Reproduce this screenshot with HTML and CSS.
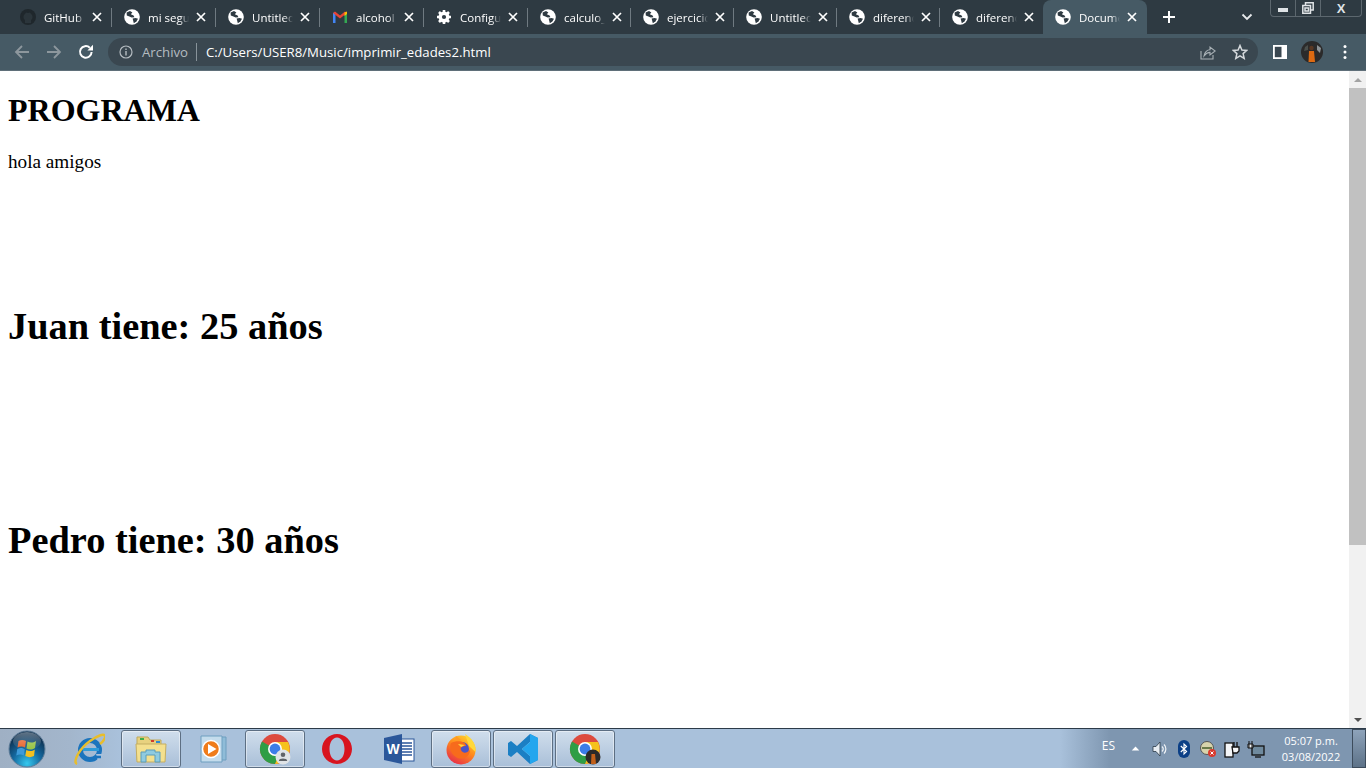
FILE: index.html
```html
<!DOCTYPE html>
<html lang="en">
<head>
  <meta charset="UTF-8" />
  <title>Document</title>
  <link rel="stylesheet" href="styles.css">
</head>
<body>
  <svg class="defs" width="0" height="0">
    <symbol id="globe" viewBox="0 0 16 16">
      <circle cx="8" cy="8" r="7.800" fill="#fff"/>
      <path d="M2.600 3.400 L6 2 L8.400 3.400 L6.800 5.200 L9.600 6.600 L10.400 8.200 L7.600 8.600 L5.400 7.600 L2.800 6.600 Z" fill="#2e3a42"/>
      <path d="M8.600 9.400 L11.600 9 L14 9.800 L12.400 12.600 L9.800 14.200 L9.200 11.800 Z" fill="#2e3a42"/>
    </symbol>
    <symbol id="close" viewBox="0 0 10 10">
      <path d="M1 1 L9 9 M9 1 L1 9" stroke="#fff" stroke-width="1.700" fill="none"/>
    </symbol>
    <symbol id="chrome" viewBox="0 0 32 32">
      <circle cx="16" cy="16" r="15" fill="#dd4b3e"/>
      <path d="M16 16 L3 8.500 A15 15 0 0 0 16 31 L23 18 Z" fill="#2f9e46"/>
      <path d="M16 9 L29 9 A15 15 0 0 1 16 31 L22 18 Z" fill="#f6c21c"/>
      <circle cx="16" cy="16" r="7" fill="#fff"/>
      <circle cx="16" cy="16" r="5.400" fill="#3b7de8"/>
    </symbol>
  </svg>

  <div class="chrome-top">
    <div class="tabstrip">
      <div class="tab sep">
        <svg class="fav" viewBox="0 0 16 16"><circle cx="8" cy="8" r="8" fill="#1f272c"/><path d="M5 14 V11 C3 10 3 6 5 5 L6 3.500 C7 4 9 4 10 3.500 L11 5 C13 6 13 10 11 11 V14 Z" fill="#2b353b"/></svg>
        <span class="tab-title">GitHub</span>
        <svg class="x"><use href="#close"/></svg>
      </div>
      <div class="tab sep">
        <svg class="fav"><use href="#globe"/></svg>
        <span class="tab-title">mi segu</span>
        <svg class="x"><use href="#close"/></svg>
      </div>
      <div class="tab sep">
        <svg class="fav"><use href="#globe"/></svg>
        <span class="tab-title">Untitled</span>
        <svg class="x"><use href="#close"/></svg>
      </div>
      <div class="tab sep">
        <svg class="fav" viewBox="0 0 16 16">
          <path d="M1 14 V4 L3.500 3 V14 Z" fill="#4285f4"/>
          <path d="M15 14 V4 L12.500 3 V14 Z" fill="#34a853"/>
          <path d="M1 4 L3 2.400 L8 6.400 L13 2.400 L15 4 L8 9.600 Z" fill="#ea4335"/>
          <path d="M12.500 3.400 L15 2.600 V5 L12.500 7 Z" fill="#fbbc04"/>
        </svg>
        <span class="tab-title">alcohol</span>
        <svg class="x"><use href="#close"/></svg>
      </div>
      <div class="tab sep">
        <svg class="fav" viewBox="0 0 16 16">
          <circle cx="8" cy="8" r="3.800" fill="none" stroke="#fff" stroke-width="3.400"/>
          <path d="M8 1 V15 M1 8 H15 M3 3 L13 13 M13 3 L3 13" stroke="#fff" stroke-width="2.600"/>
          <circle cx="8" cy="8" r="2.100" fill="#2e3a42"/>
        </svg>
        <span class="tab-title">Configu</span>
        <svg class="x"><use href="#close"/></svg>
      </div>
      <div class="tab sep">
        <svg class="fav"><use href="#globe"/></svg>
        <span class="tab-title">calculo_</span>
        <svg class="x"><use href="#close"/></svg>
      </div>
      <div class="tab sep">
        <svg class="fav"><use href="#globe"/></svg>
        <span class="tab-title">ejercicio</span>
        <svg class="x"><use href="#close"/></svg>
      </div>
      <div class="tab sep">
        <svg class="fav"><use href="#globe"/></svg>
        <span class="tab-title">Untitled</span>
        <svg class="x"><use href="#close"/></svg>
      </div>
      <div class="tab sep">
        <svg class="fav"><use href="#globe"/></svg>
        <span class="tab-title">diferenc</span>
        <svg class="x"><use href="#close"/></svg>
      </div>
      <div class="tab">
        <svg class="fav"><use href="#globe"/></svg>
        <span class="tab-title">diferenc</span>
        <svg class="x"><use href="#close"/></svg>
      </div>
      <div class="tab active">
        <svg class="fav"><use href="#globe"/></svg>
        <span class="tab-title">Docume</span>
        <svg class="x"><use href="#close"/></svg>
      </div>
      <svg class="new-tab" viewBox="0 0 14 14"><path d="M7 1 V13 M1 7 H13" stroke="#fff" stroke-width="2" fill="none"/></svg>
      <svg class="tab-menu" viewBox="0 0 12 8"><path d="M1.500 1.500 L6 6 L10.500 1.500" stroke="#e8eaed" stroke-width="1.800" fill="none"/></svg>
    </div>
    <div class="winbtns">
      <div class="winbtn min"><span class="min-bar"></span></div>
      <div class="winbtn restore">
        <svg viewBox="0 0 12 12" width="12" height="12"><path d="M3.500 3 V.8 H11.200 V8 H9 M.8 3.500 H8.500 V11.200 H.8 Z M3 6 H6.500 V9 H3 Z" stroke="#dfe3e6" stroke-width="1.500" fill="none"/></svg>
      </div>
      <div class="winbtn closebtn">X</div>
    </div>
  </div>

  <div class="toolbar">
    <svg class="nav-ico" viewBox="0 0 16 16"><path d="M15 8 H2 M8 2 L2 8 L8 14" stroke="#8d979d" stroke-width="1.800" fill="none"/></svg>
    <svg class="nav-ico" viewBox="0 0 16 16"><path d="M1 8 H14 M8 2 L14 8 L8 14" stroke="#8d979d" stroke-width="1.800" fill="none"/></svg>
    <svg class="nav-ico" viewBox="0 0 16 16"><path d="M13.600 8 A5.800 5.800 0 1 1 11.800 3.700" stroke="#fff" stroke-width="2" fill="none"/><path d="M9.400 6.400 H15 V.8 Z" fill="#fff"/></svg>
    <div class="omnibox">
      <svg class="info" viewBox="0 0 14 14"><circle cx="7" cy="7" r="6" stroke="#b5bcc1" stroke-width="1.200" fill="none"/><path d="M7 6 V10.500 M7 3.500 V5" stroke="#b5bcc1" stroke-width="1.400"/></svg>
      <span class="scheme">Archivo</span>
      <span class="url">C:/Users/USER8/Music/imprimir_edades2.html</span>
      <svg class="share" viewBox="0 0 16 16"><path d="M1 7 V15 H13 V11" stroke="#a9b1b6" stroke-width="1.100" fill="none"/><path d="M4 12 C4.500 8 7.500 5.800 10 5.800 V3 L15.200 7 L10 11 V8.400 C7.800 8.400 5.800 9.600 4 12 Z" stroke="#a9b1b6" stroke-width="1.100" fill="none"/></svg>
      <svg class="star" viewBox="0 0 16 16"><path d="M8 1.500 L9.900 6 L14.800 6.400 L11.100 9.600 L12.200 14.400 L8 11.900 L3.800 14.400 L4.900 9.600 L1.200 6.400 L6.100 6 Z" stroke="#d5d9dc" stroke-width="1.500" fill="none"/></svg>
    </div>
    <svg class="side" viewBox="0 0 14 14"><rect width="14" height="14" fill="#fff"/><rect x="1.800" y="1.800" width="6.700" height="10.400" fill="#3a4750"/></svg>
    <svg class="avatar" viewBox="0 0 22 22">
      <circle cx="11" cy="11" r="11" fill="#2b2a2a"/>
      <path d="M16 4 L20 7 L19 12 L16 9 Z" fill="#8e9396"/>
      <path d="M4 6 L7 4 L7 9 L3 10 Z" fill="#4a4f4c"/>
      <circle cx="10.500" cy="7" r="2.200" fill="#5a3823"/>
      <path d="M7.500 21 L8 10 H13 L14 21 Z" fill="#dd6a12"/>
    </svg>
    <svg class="dots" viewBox="0 0 4 16"><circle cx="2" cy="2.500" r="1.500" fill="#fff"/><circle cx="2" cy="8" r="1.500" fill="#fff"/><circle cx="2" cy="13.500" r="1.500" fill="#fff"/></svg>
  </div>

  <div class="viewport">
    <main class="page">
      <h1 class="title">PROGRAMA</h1>
      <p class="hello">hola amigos</p>
      <h2 class="age">Juan tiene: 25 años</h2>
      <h2 class="age">Pedro tiene: 30 años</h2>
    </main>
    <div class="scrollbar">
      <div class="arrow up"></div>
      <div class="thumb-track"><div class="thumb"></div></div>
      <div class="arrow down"></div>
    </div>
  </div>

  <div class="taskbar">
    <svg class="orb" viewBox="0 0 38 38">
      <defs>
        <radialGradient id="orbfill" cx="50%" cy="90%" r="80%"><stop offset="0" stop-color="#35c8ee"/><stop offset=".5" stop-color="#14689f"/><stop offset="1" stop-color="#0c2c4a"/></radialGradient>
        <linearGradient id="orbshine" x1="0" y1="0" x2="0" y2="1"><stop offset="0" stop-color="#fff" stop-opacity=".35"/><stop offset="1" stop-color="#fff" stop-opacity="0"/></linearGradient>
      </defs>
      <circle cx="19" cy="19" r="18" fill="url(#orbfill)" stroke="#5f7d99"/>
      <path d="M10.500 11 C13 9.500 15.500 9.500 18 11 L17 17.500 C14.500 16 12 16 9.500 17.500 Z" fill="#e8632c"/>
      <path d="M19.500 11.500 C22 13 25 13 28 11 L27 18 C24 20 21.500 20 18.500 18.500 Z" fill="#96c243"/>
      <path d="M9.300 19 C12 17.500 14 17.500 16.800 19.300 L15.800 25.500 C13 24 11 24 8.300 25.500 Z" fill="#3d9ad9"/>
      <path d="M18.300 20 C21 21.500 24 21.500 26.800 19.500 L26 26 C23 27.500 20.500 27.500 17.300 26 Z" fill="#f4c01f"/>
      <ellipse cx="19" cy="11" rx="14" ry="9" fill="url(#orbshine)"/>
    </svg>
    <div class="pin">
      <svg class="task-ico" viewBox="0 0 32 32">
        <circle cx="17" cy="17" r="9.500" fill="none" stroke="#1b74bd" stroke-width="5"/>
        <path d="M10 16.500 H26" stroke="#2f9bd8" stroke-width="3"/>
        <path d="M23 21 L31 21 L25 28 Z" fill="#a9c1db"/>
        <path d="M22 24 H28" stroke="#1b74bd" stroke-width="2.500"/>
        <path d="M4 31 C-1 29 7 15 17 8 C24 3 31 0 32 3 C32.500 5 30 9 27 11" fill="none" stroke="#e8bd2c" stroke-width="2.400"/>
      </svg>
    </div>
    <div class="pin open">
      <svg class="task-ico" viewBox="0 0 32 32">
        <path d="M2 4 H13 L15 7 H26 V27 H2 Z" fill="#e8d27f" stroke="#bfa95a"/>
        <rect x="5" y="5" width="4" height="2" fill="#3fae49"/>
        <path d="M1 11 H31 L30 29 H2 Z" fill="#f4e08e" stroke="#c4ae62"/>
        <rect x="16" y="7" width="3" height="2" fill="#d23a2c"/>
        <rect x="21" y="8" width="4" height="2" fill="#2c8ad2"/>
        <path d="M6 29 V19 H11 V17 H20 V19 H25 V29 H20 V22 H11 V29 Z" fill="#8fcbe0" stroke="#5b9cba"/>
      </svg>
    </div>
    <div class="pin">
      <svg class="task-ico" viewBox="0 0 32 32">
        <path d="M8 4 H29 V27 H8 Z" fill="#8fbcd8" stroke="#6f9fc0"/>
        <path d="M4 3 H25 V29 H4 Z" fill="#c4dcec" stroke="#6f9fc0"/>
        <circle cx="14" cy="16" r="8.500" fill="#ef7c1a" stroke="#fff" stroke-width="1.500"/>
        <path d="M11 11 L19.500 16 L11 21 Z" fill="#fff"/>
      </svg>
    </div>
    <div class="pin open">
      <svg class="task-ico" viewBox="0 0 32 32">
        <use href="#chrome"/>
        <circle cx="24" cy="24" r="7.500" fill="#dfe3e6"/>
        <circle cx="24" cy="21.800" r="2.300" fill="#5f6368"/>
        <path d="M19.800 28 C20 24.800 28 24.800 28.200 28 Z" fill="#5f6368"/>
      </svg>
    </div>
    <div class="pin">
      <svg class="task-ico" viewBox="0 0 32 32">
        <path d="M16 1 C24 1 31 7.500 31 16 C31 24.500 24 31 16 31 C8 31 1 24.500 1 16 C1 7.500 8 1 16 1 Z M16 4.500 C11.500 4.500 8.500 9.500 8.500 16 C8.500 22.500 11.500 27.500 16 27.500 C20.500 27.500 23.500 22.500 23.500 16 C23.500 9.500 20.500 4.500 16 4.500 Z" fill="#d8141f" fill-rule="evenodd"/>
      </svg>
    </div>
    <div class="pin">
      <svg class="task-ico" viewBox="0 0 32 32">
        <rect x="14" y="6" width="17" height="22" fill="#fff" stroke="#2b579a"/>
        <path d="M18 10 H29 M18 13 H29 M18 16 H29 M18 19 H29 M18 22 H29" stroke="#2b579a" stroke-width="1.400"/>
        <path d="M1 5 L19 1 V31 L1 27 Z" fill="#2b579a"/>
        <text class="word-w" x="10" y="21" text-anchor="middle">W</text>
      </svg>
    </div>
    <div class="pin open">
      <svg class="task-ico" viewBox="0 0 32 32">
        <defs>
          <linearGradient id="foxfill" x1="0.800" y1="0" x2="0.200" y2="1"><stop offset="0" stop-color="#ffd52e"/><stop offset=".45" stop-color="#ff8a1c"/><stop offset="1" stop-color="#e5274d"/></linearGradient>
        </defs>
        <circle cx="16" cy="17" r="14.500" fill="url(#foxfill)"/>
        <path d="M20 1 C27 5 31.500 12 30.500 19 L24 13 Z" fill="#ffd83a"/>
        <path d="M11 3 C10 6 10 8 11 9 L16 7 Z" fill="#ff9a24"/>
        <circle cx="17" cy="16" r="7" fill="#4a55c8"/>
        <path d="M6 10 C12 7 21 8 21 13 C18 13 15 14 16 17 C18 21 22 20 25 17 C25 24 17 28 11 24 C6 21 4 15 6 10 Z" fill="#f76b1c"/>
        <path d="M13 11 L20 12 L16 14 Z" fill="#ffd83a"/>
      </svg>
    </div>
    <div class="pin open">
      <svg class="task-ico" viewBox="0 0 32 32">
        <path d="M23 1 L31 5 V27 L23 31 L10 19 L4 24 L1 22 V10 L4 8 L10 13 Z M23 9 L15 16 L23 23 Z" fill="#1b7fc4" fill-rule="evenodd"/>
        <path d="M23 1 L31 5 V27 L23 31 Z M23 9 V23 L15 16 Z" fill="#23a6ee" fill-rule="evenodd"/>
      </svg>
    </div>
    <div class="pin open">
      <svg class="task-ico" viewBox="0 0 32 32">
        <use href="#chrome"/>
        <circle cx="24" cy="24" r="7.500" fill="#2c2a29"/>
        <path d="M22 31 L22.500 21 H26 L27 31 Z" fill="#c2601a"/>
      </svg>
    </div>

    <div class="tray">
      <span class="lang">ES</span>
      <svg class="tray-up" viewBox="0 0 10 6"><path d="M5 .5 L9.500 5.500 H.5 Z" fill="#fff"/></svg>
      <svg class="tray-ico" viewBox="0 0 18 18"><path d="M2 6.500 H5 L9 2 V16 L5 11.500 H2 Z" fill="#e8edf2" stroke="#2b3a48" stroke-width=".8"/><path d="M11 6.500 C12.500 8 12.500 10 11 11.500 M13 4.500 C15.500 7 15.500 11 13 13.500" stroke="#f0f3f6" stroke-width="1.200" fill="none"/></svg>
      <svg class="tray-ico" viewBox="0 0 18 18"><rect x="3" y="0" width="12" height="18" rx="6" fill="#0b3f86"/><path d="M5.800 6 L11.600 11.500 L9 14 V4 L11.600 6.500 L5.800 12" stroke="#fff" stroke-width="1.100" fill="none"/></svg>
      <svg class="tray-ico" viewBox="0 0 18 18"><circle cx="8" cy="8" r="6.500" fill="#d8d4ac" stroke="#555"/><path d="M3 8 H13" stroke="#6b7a4a" stroke-width="2"/><circle cx="13" cy="13" r="4" fill="#d93a2e"/><path d="M11.500 11.500 L14.500 14.500 M14.500 11.500 L11.500 14.500" stroke="#fff"/></svg>
      <svg class="tray-ico" viewBox="0 0 18 18"><rect x="2" y="3" width="8" height="14" fill="#f4f6f8" stroke="#111" stroke-width="1.300"/><path d="M9 7 H16 V11 L14 13 H10 Z M11 2 V7 M14 2 V7" fill="#f4f6f8" stroke="#111" stroke-width="1.300"/></svg>
      <svg class="tray-ico" viewBox="0 0 18 18"><rect x="5" y="6" width="12" height="9" fill="#6f8a9e" stroke="#111" stroke-width="1.300"/><path d="M8 17 H14" stroke="#111" stroke-width="1.300"/><path d="M2 1 V8 M5 1 V8 M1 4 H6 V8 H1 Z" fill="#f4f6f8" stroke="#111"/></svg>
      <div class="clock">
        <span>05:07 p.m.</span>
        <span>03/08/2022</span>
      </div>
      <div class="show-desktop"></div>
    </div>
  </div>
</body>
</html>
```

FILE: styles.css
```css
* {
  box-sizing: border-box;
}
html, body {
  margin: 0;
  height: 768px;
  overflow: hidden;
}
body {
  display: flex;
  flex-direction: column;
  font-family: "Liberation Sans", sans-serif;
  background: white;
}
.defs {
  position: absolute;
}

/* browser frame */
.chrome-top {
  height: 34px;
  background: #2e3a42;
  flex-shrink: 0;
  position: relative;
}
.tabstrip {
  display: flex;
  align-items: stretch;
  height: 34px;
  padding-left: 8px;
}
.tab {
  width: 104px;
  flex-shrink: 0;
  display: flex;
  align-items: center;
  padding-left: 12px;
  position: relative;
  color: #fff;
  font: 11.5px "Open Sans", sans-serif;
}
.tab:nth-child(n+6) {
  width: 103px;
}
.tab.sep::after {
  content: "";
  position: absolute;
  right: 0;
  top: 8px;
  height: 19px;
  width: 1px;
  background: #6f7a81;
}
.tab.active {
  width: 104px;
  background: #465a65;
  border-radius: 8px 8px 0 0;
}
.fav {
  width: 16px;
  height: 16px;
  flex-shrink: 0;
}
.tab-title {
  width: 41px;
  margin-left: 8px;
  overflow: hidden;
  white-space: nowrap;
  -webkit-mask-image: linear-gradient(to right, #000 78%, transparent);
  mask-image: linear-gradient(to right, #000 78%, transparent);
}
.x {
  width: 10px;
  height: 10px;
  margin-left: 7px;
}
.new-tab {
  width: 14px;
  height: 14px;
  margin: 10px 0 0 15px;
}
.tab-menu {
  width: 12px;
  height: 8px;
  margin: 13px 0 0 65px;
}
.winbtns {
  position: absolute;
  top: 0;
  right: 0;
  display: flex;
  width: 92px;
  height: 17px;
  margin-right: 4px;
  border: 1px solid #5c676e;
  border-top: none;
  border-radius: 0 0 4px 4px;
}
.winbtn {
  display: flex;
  align-items: center;
  justify-content: center;
  width: 25px;
  height: 16px;
  border-right: 1px solid #5c676e;
  color: #dfe3e6;
}
.closebtn {
  width: 40px;
  border-right: none;
  font: bold 13px "Liberation Sans", sans-serif;
}
.min-bar {
  width: 10px;
  height: 4px;
  margin-top: 4px;
  background: #dfe3e6;
}
.toolbar {
  height: 37px;
  background: #465a65;
  border-bottom: 1px solid #5f6f79;
  display: flex;
  align-items: center;
  padding-left: 14px;
  flex-shrink: 0;
}
.nav-ico {
  width: 16px;
  height: 16px;
  margin-right: 16px;
}
.omnibox {
  width: 1150px;
  height: 28px;
  margin-left: -2px;
  border-radius: 14px;
  background: #3a4750;
  display: flex;
  align-items: center;
  padding-left: 11px;
  font: 13.2px "Open Sans", sans-serif;
}
.info {
  width: 14px;
  height: 14px;
}
.scheme {
  color: #b5bcc1;
  margin-left: 9px;
  padding-right: 8px;
  border-right: 1px solid #88939a;
}
.url {
  color: #fff;
  margin-left: 9px;
}
.share {
  width: 16px;
  height: 16px;
  margin-left: auto;
}
.star {
  width: 16px;
  height: 16px;
  margin: 0 10px 0 16px;
}
.side {
  width: 14px;
  height: 14px;
  margin-left: 15px;
}
.avatar {
  width: 22px;
  height: 22px;
  margin-left: 14px;
}
.dots {
  width: 4px;
  height: 16px;
  margin-left: 20px;
}

/* page */
.viewport {
  flex: 1;
  display: flex;
  min-height: 0;
}
.page {
  flex: 1;
  padding: 0 8px;
  font-family: "Liberation Serif", serif;
  color: #000;
}
.title {
  font-size: 32px;
  margin: 21px 0 0;
  line-height: 37px;
}
.hello {
  font-size: 19.2px;
  margin: 22px 0 0;
  line-height: 22px;
}
.age {
  font-size: 38.4px;
  line-height: 44px;
  margin: 131px 0 0;
}
.age + .age {
  margin-top: 170px;
}
.scrollbar {
  width: 17px;
  background: #f1f1f1;
  display: flex;
  flex-direction: column;
}
.arrow {
  height: 17px;
  display: flex;
  align-items: center;
  justify-content: center;
}
.arrow::after {
  content: "";
  border-left: 4px solid transparent;
  border-right: 4px solid transparent;
}
.arrow.up::after {
  border-bottom: 4px solid #a3a3a3;
}
.arrow.down::after {
  border-top: 4px solid #505050;
}
.thumb-track {
  flex: 1;
}
.thumb {
  height: 457px;
  background: #c1c1c1;
}

/* windows taskbar */
.taskbar {
  height: 40px;
  flex-shrink: 0;
  display: flex;
  align-items: center;
  padding-left: 59px;
  position: relative;
  border-top: 1px solid #2c3a48;
  background: linear-gradient(to right, #9fb0c4 0, #a3b6cc 70px, #a9c1db 120px, #a9c1db 1060px, #7e96b0 1110px, #7e96b0 100%);
}
.orb {
  position: absolute;
  left: 8px;
  top: 1px;
  width: 38px;
  height: 38px;
}
.pin {
  width: 60px;
  height: 38px;
  margin-right: 2px;
  display: flex;
  align-items: center;
  justify-content: center;
  border: 1px solid transparent;
  border-radius: 3px;
}
.pin.open {
  border-color: #5d6f83;
  background: linear-gradient(to bottom, #d0deec, #a9bfd8);
  box-shadow: inset 0 0 0 1px rgba(255, 255, 255, 0.45);
}
.task-ico {
  width: 32px;
  height: 32px;
}
.word-w {
  font: bold 14px "Liberation Sans", sans-serif;
  fill: #fff;
}
.tray {
  margin-left: auto;
  display: flex;
  align-items: center;
  height: 100%;
  color: #fff;
}
.lang {
  font: 12px "Open Sans", sans-serif;
  margin-top: -6px;
}
.tray-up {
  width: 9px;
  height: 5px;
  margin: 0 5px 0 16px;
}
.tray-ico {
  width: 18px;
  height: 18px;
  margin-left: 6px;
}
.clock {
  display: flex;
  flex-direction: column;
  align-items: center;
  width: 80px;
  margin-left: 6px;
  font: 11px/16px "Open Sans", sans-serif;
}
.show-desktop {
  width: 14px;
  height: 100%;
  margin-left: 1px;
  border: 1px solid #3d4c5c;
  background: linear-gradient(to bottom, #8ea3ba, #5d7288);
}
```
